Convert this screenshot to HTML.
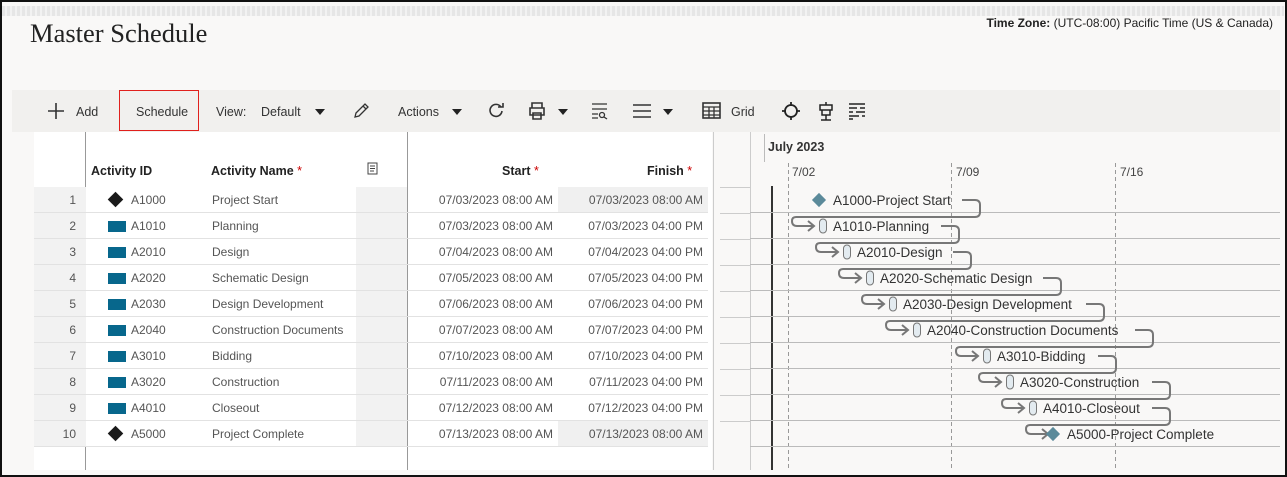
<!DOCTYPE html>
<html><head><meta charset="utf-8"><style>
*{margin:0;padding:0;box-sizing:border-box}
body{width:1287px;height:477px;background:#f9f8f7;font-family:"Liberation Sans",sans-serif;color:#333;position:relative;overflow:hidden}
.frame{position:absolute;left:0;top:0;width:1287px;height:477px;border:2px solid #111;border-right-width:2px;z-index:10;pointer-events:none}
.abs{position:absolute}
.noise{left:2px;top:6px;width:1282px;height:10px;background:repeating-linear-gradient(90deg,#e6e6e6 0 3px,#f2f2f2 3px 5px)}
h1{position:absolute;left:30px;top:18px;font-family:"Liberation Serif",serif;font-weight:normal;font-size:26.5px;color:#222}
.tz{right:14px;top:16px;font-size:12px;color:#222}
.tb{left:12px;top:90px;width:1268px;height:42px;background:#f1f0ee}
.tb span{position:absolute;top:15px;font-size:12.5px;color:#333}
.tri{width:0;height:0;border-left:5px solid transparent;border-right:5px solid transparent;border-top:6px solid #222;position:absolute}
.grid{left:34px;top:132px;width:678px;height:338px;background:#fff}
.cell{position:absolute;font-size:12px;color:#555;height:26px;line-height:26px}
.hdr{position:absolute;top:164px;font-size:12.5px;font-weight:bold;color:#222}
.req{color:#c00;font-weight:normal}
</style></head><body>
<div class="abs noise"></div>
<h1>Master Schedule</h1>
<div class="abs tz"><b>Time Zone:</b> (UTC-08:00) Pacific Time (US &amp; Canada)</div>
<div class="abs tb">
 <svg class="abs" style="left:35px;top:12px" width="18" height="18"><path d="M9 1V17M1 9H17" stroke="#333" stroke-width="1.6"/></svg>
 <span style="left:64px">Add</span>
 <div class="abs" style="left:107px;top:0;width:80px;height:41px;border:1px solid #e0201c"></div>
 <span style="left:124px">Schedule</span>
 <span style="left:204px">View:</span><span style="left:249px">Default</span>
 <div class="tri" style="left:303px;top:19px"></div>
 <svg class="abs" style="left:340px;top:12px" width="18" height="18"><path d="M3 15L4 11L13 2L16 5L7 14Z M11 4L14 7" fill="none" stroke="#333" stroke-width="1.3"/></svg>
 <span style="left:386px">Actions</span>
 <div class="tri" style="left:440px;top:19px"></div>
 <svg class="abs" style="left:475px;top:12px" width="18" height="18"><path d="M14 5A6 6 0 1 0 15 9" fill="none" stroke="#333" stroke-width="1.6"/><path d="M11 5H16V1" fill="none" stroke="#333" stroke-width="1.6"/></svg>
 <svg class="abs" style="left:515px;top:11px" width="20" height="20"><path d="M5 7V2H15V7M3 7H17V14H3Z M6 12H14V18H6Z" fill="none" stroke="#333" stroke-width="1.6"/></svg>
 <div class="tri" style="left:546px;top:19px"></div>
 <svg class="abs" style="left:578px;top:11px" width="20" height="20"><path d="M2 3H17M2 8H17M2 13H8M2 17H8" stroke="#333" stroke-width="1.3"/><circle cx="12" cy="14" r="2.5" fill="none" stroke="#333" stroke-width="1.3"/><path d="M14 16L17 18" stroke="#333" stroke-width="1.3"/></svg>
 <svg class="abs" style="left:620px;top:12px" width="20" height="18"><path d="M1 3H19M1 9H19M1 15H19" stroke="#333" stroke-width="1.6"/></svg>
 <div class="tri" style="left:651px;top:19px"></div>
 <svg class="abs" style="left:690px;top:12px" width="20" height="18"><rect x="1" y="1" width="17" height="15" fill="none" stroke="#333" stroke-width="1.6"/><path d="M1 5H18M1 9H18M1 13H18M7 5V16M12 5V16" stroke="#333" stroke-width="1.3"/></svg>
 <span style="left:719px">Grid</span>
 <svg class="abs" style="left:769px;top:11px" width="20" height="20"><circle cx="10" cy="10" r="6" fill="none" stroke="#222" stroke-width="1.8"/><path d="M10 1V5M10 15V19M1 10H5M15 10H19" stroke="#222" stroke-width="1.8"/></svg>
 <svg class="abs" style="left:806px;top:12px" width="16" height="19"><path d="M8 0V3M2 3H14V8H2ZM4 8V13H12V8M8 13V18M3 18H13" fill="none" stroke="#222" stroke-width="1.5"/></svg>
 <svg class="abs" style="left:836px;top:12px" width="18" height="18"><path d="M1 2H17M1 6H9M12 6H17M1 10H5M8 10H17M1 14H11M14 14H17M1 17H5" stroke="#222" stroke-width="1.5"/></svg>
</div>

<div class="abs grid"></div>
<div class="abs" style="left:85px;top:132px;width:1px;height:338px;background:#999"></div>
<div class="abs" style="left:407px;top:132px;width:1px;height:338px;background:#999"></div>
<div class="abs" style="left:712px;top:132px;width:8px;height:338px;background:#f9f8f7"></div>
<div class="abs" style="left:713px;top:132px;width:1px;height:338px;background:#ccc"></div>
<div class="hdr" style="left:91px">Activity ID</div>
<div class="hdr" style="left:211px">Activity Name <span class="req">*</span></div>
<svg class="abs" style="left:367px;top:162px" width="11" height="13"><rect x="1" y="1" width="9" height="11" fill="none" stroke="#444"/><path d="M3 4H8M3 6.5H8M3 9H7" stroke="#444"/></svg>
<div class="hdr" style="left:502px">Start <span class="req">*</span></div>
<div class="hdr" style="left:647px">Finish <span class="req">*</span></div>
<div id="rows"></div>

<svg class="abs" style="left:0;top:0" width="1287" height="477" id="g">
 <rect x="720" y="132" width="560" height="338" fill="#f9f8f7"/>
 <line x1="750.5" y1="132" x2="750.5" y2="470" stroke="#ccc"/>
 <line x1="764.5" y1="134" x2="764.5" y2="162" stroke="#bbb"/>
 <text x="768" y="151" font-size="12.5" font-weight="bold" fill="#333" font-family="Liberation Sans">July 2023</text>
 <text x="792" y="176" font-size="12" fill="#444" font-family="Liberation Sans">7/02</text>
 <text x="956" y="176" font-size="12" fill="#444" font-family="Liberation Sans">7/09</text>
 <text x="1120" y="176" font-size="12" fill="#444" font-family="Liberation Sans">7/16</text>
 <g stroke="#999" stroke-dasharray="4,3"><line x1="788.5" y1="163" x2="788.5" y2="470"/><line x1="951.5" y1="163" x2="951.5" y2="470"/><line x1="1115.5" y1="163" x2="1115.5" y2="470"/></g>
 <line x1="772" y1="186" x2="772" y2="470" stroke="#333" stroke-width="2"/>
</svg>

<div class="frame"></div>
<script>
var d=[["A1000","Project Start","07/03/2023 08:00 AM","07/03/2023 08:00 AM",1,819,980],
["A1010","Planning","07/03/2023 08:00 AM","07/03/2023 04:00 PM",0,819,959],
["A2010","Design","07/04/2023 08:00 AM","07/04/2023 04:00 PM",0,843,971],
["A2020","Schematic Design","07/05/2023 08:00 AM","07/05/2023 04:00 PM",0,866,1061],
["A2030","Design Development","07/06/2023 08:00 AM","07/06/2023 04:00 PM",0,889,1104],
["A2040","Construction Documents","07/07/2023 08:00 AM","07/07/2023 04:00 PM",0,913,1153],
["A3010","Bidding","07/10/2023 08:00 AM","07/10/2023 04:00 PM",0,983,1116],
["A3020","Construction","07/11/2023 08:00 AM","07/11/2023 04:00 PM",0,1006,1170],
["A4010","Closeout","07/12/2023 08:00 AM","07/12/2023 04:00 PM",0,1029,1170],
["A5000","Project Complete","07/13/2023 08:00 AM","07/13/2023 08:00 AM",1,1053,0]];
var h='',s='';
for(var i=0;i<10;i++){var r=d[i],y=187+i*26,cy=y+13;
h+='<div class="abs" style="left:34px;top:'+y+'px;width:52px;height:26px;background:#f2f2f2"></div>';
h+='<div class="abs" style="left:356px;top:'+y+'px;width:51px;height:26px;background:#f2f2f2"></div>';
h+='<div class="abs" style="left:558px;top:'+y+'px;width:150px;height:26px;background:'+(r[4]?'#f0f0f0':'#fff')+'"></div>';
h+='<div class="abs" style="left:34px;top:'+(y+25)+'px;width:674px;height:1px;background:#e2e2e2"></div>';
h+='<div class="cell" style="left:34px;top:'+y+'px;width:42px;text-align:right">'+(i+1)+'</div>';
h+=r[4]?'<div class="abs" style="left:110px;top:'+(y+7)+'px;width:11px;height:11px;background:#1a1a1a;transform:rotate(45deg)"></div>':'<div class="abs" style="left:108px;top:'+(y+8)+'px;width:18px;height:11px;background:#07678c"></div>';
h+='<div class="cell" style="left:131px;top:'+y+'px">'+r[0]+'</div><div class="cell" style="left:212px;top:'+y+'px">'+r[1]+'</div>';
h+='<div class="cell" style="left:409px;top:'+y+'px;width:144px;text-align:right">'+r[2]+'</div><div class="cell" style="left:558px;top:'+y+'px;width:145px;text-align:right">'+r[3]+'</div>';
var lx;
s+='<line x1="750" y1="'+(y+25.5)+'" x2="1280" y2="'+(y+25.5)+'" stroke="#bbb"/>';
s+='<line x1="720" y1="'+(y+0.5)+'" x2="750" y2="'+(y+0.5)+'" stroke="#ccc"/>';
if(r[4]){s+='<rect x="'+(r[5]-5)+'" y="'+(cy-5)+'" width="10" height="10" fill="#5b8a9a" transform="rotate(45 '+r[5]+' '+cy+')"/>';lx=r[5]+14;}
else{s+='<rect x="'+(r[5]+0.5)+'" y="'+(cy-7)+'" width="7" height="14" rx="3.5" fill="#e3ebf0" stroke="#777"/>';lx=r[5]+14;}
s+='<text x="'+lx+'" y="'+(cy+5)+'" font-size="13.5" fill="#333" font-family="Liberation Sans">'+r[0]+'-'+r[1]+'</text>';
if(i<9){var R=r[6],n=d[i+1][5],hx=n-27,b=cy+17,ny=cy+26;
s+='<path d="M'+(R-18)+' '+cy+'H'+(R-5)+'Q'+R+' '+cy+' '+R+' '+(cy+5)+'V'+(b-5)+'Q'+R+' '+b+' '+(R-5)+' '+b+'H'+(hx+4)+'Q'+hx+' '+b+' '+hx+' '+(b+4)+'Q'+hx+' '+ny+' '+(hx+5)+' '+ny+'H'+(n-5)+'M'+(n-11)+' '+(ny-5)+'L'+(n-5)+' '+ny+'L'+(n-11)+' '+(ny+5)+'" fill="none" stroke="#777" stroke-width="2"/>';}
}
document.getElementById('rows').innerHTML=h;
document.getElementById('g').insertAdjacentHTML('beforeend',s);
</script>
</body></html>
